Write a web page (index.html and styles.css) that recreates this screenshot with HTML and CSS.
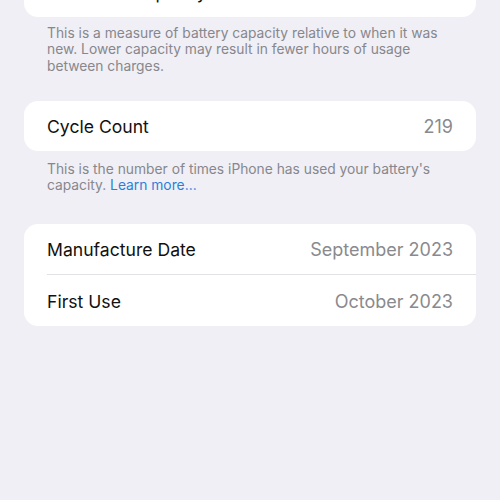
FILE: index.html
```html
<!DOCTYPE html>
<html lang="en">
<head>
    <meta charset="UTF-8">
    <meta name="viewport" content="width=device-width, initial-scale=1.0">
    <title>Battery Health</title>
    <link rel="stylesheet" href="styles.css">
</head>
<body>
    <div class="page">
        <div class="group group-top">
            <div class="row">
                <span class="label">Maximum Capacity</span>
            </div>
        </div>
        <p class="footer">This is a measure of battery capacity relative to when it was new. Lower capacity may result in fewer hours of usage between charges.</p>

        <div class="group">
            <div class="row">
                <span class="label">Cycle Count</span>
                <span class="value">219</span>
            </div>
        </div>
        <p class="footer footer-wide">This is the number of times iPhone has used your battery's capacity. <a href="#" class="link">Learn more…</a></p>

        <div class="group">
            <div class="row">
                <span class="label">Manufacture Date</span>
                <span class="value">September 2023</span>
            </div>
            <div class="row row-sep">
                <span class="label">First Use</span>
                <span class="value">October 2023</span>
            </div>
        </div>
    </div>
</body>
</html>
```

FILE: styles.css
```css
* {
    margin: 0;
    padding: 0;
    box-sizing: border-box;
}

body {
    font-family: Inter, 'Noto Sans', sans-serif;
    background: #f0eff6;
    width: 500px;
    height: 500px;
    overflow: hidden;
}

.page {
    padding: 0 24px;
}

.group {
    background: #ffffff;
    border-radius: 14px;
    overflow: hidden;
}

.group-top {
    margin-top: -33px;
}

.row {
    height: 50px;
    display: flex;
    align-items: center;
    justify-content: space-between;
    padding: 1px 23px 0;
}

.row-sep {
    height: 52px;
    border-top: 1px solid #e2e2e6;
    margin-left: 23px;
    padding-left: 0;
}

.label {
    font-size: 17.6px;
    color: #111111;
}

.value {
    font-size: 18px;
    color: #8a8a8e;
}

.footer {
    font-size: 13.8px;
    line-height: 16.3px;
    color: #87878c;
    padding: 8px 23px 27px;
}

.footer-wide {
    padding: 10px 23px 31px;
}

.link {
    color: #2b7fd9;
    text-decoration: none;
}
```
